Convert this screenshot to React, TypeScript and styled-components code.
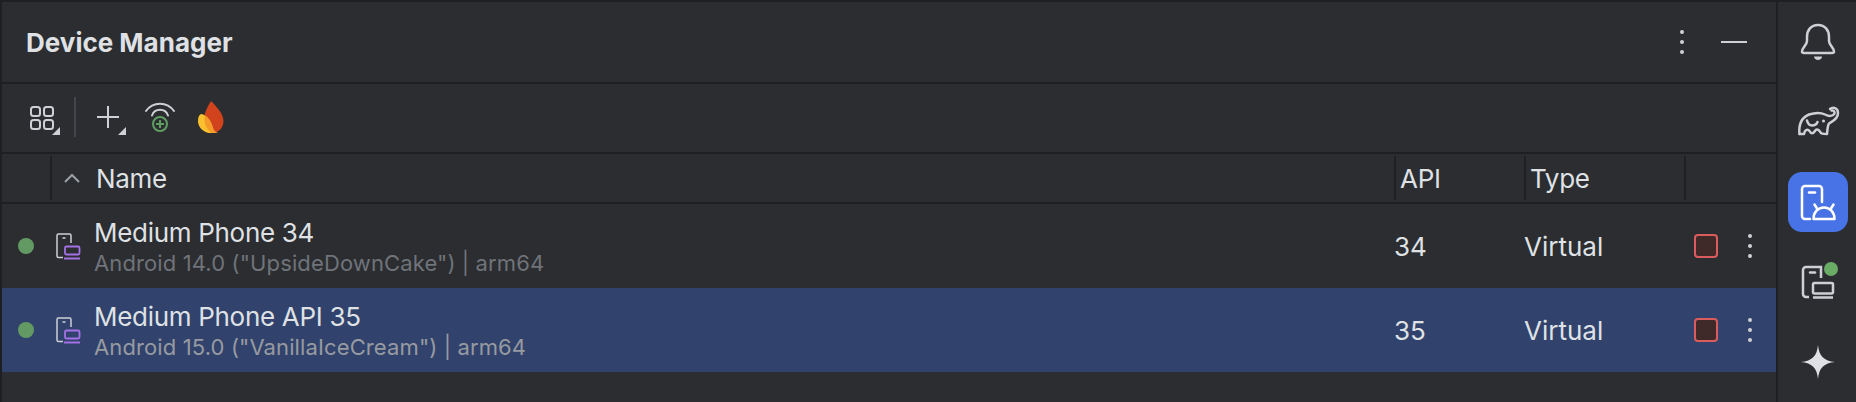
import styled, { createGlobalStyle } from 'styled-components';

const GlobalStyle = createGlobalStyle`
  html, body {
    margin: 0;
    padding: 0;
    background: #2b2d30;
    font-family: Inter, "Noto Sans", "Liberation Sans", sans-serif;
  }
`;

// ---------------------------------------------------------------------------
// Shell
// ---------------------------------------------------------------------------

const Frame = styled.div`
  display: flex;
  width: 1856px;
  height: 402px;
  box-sizing: border-box;
  border-top: 2px solid #1e1f22;
  background: #2b2d30;
  overflow: hidden;
`;

const Panel = styled.section`
  flex: 1;
  min-width: 0;
  display: flex;
  flex-direction: column;
  border-left: 2px solid #1e1f22;
`;

const TitleBar = styled.header`
  height: 82px;
  box-sizing: border-box;
  display: flex;
  align-items: center;
  padding: 0 29px 0 24px;
  border-bottom: 2px solid #1e1f22;
`;

const Title = styled.h1`
  margin: 0;
  font-size: 26px;
  font-weight: 700;
  color: #dfe1e5;
`;

const TitleActions = styled.div`
  margin-left: auto;
  display: flex;
  align-items: center;
  gap: 37px;
`;

const Dash = styled.div`
  width: 26px;
  height: 2px;
  background: #ced0d6;
`;

const Toolbar = styled.div`
  height: 70px;
  box-sizing: border-box;
  display: flex;
  align-items: center;
  gap: 8px;
  padding: 0 0 2px 20px;
  border-bottom: 2px solid #1e1f22;
`;

const ToolSlot = styled.svg`
  width: 44px;
  height: 44px;
  flex: none;
`;

const ToolDivider = styled.div`
  width: 2px;
  height: 40px;
  background: #43454a;
`;

// ---------------------------------------------------------------------------
// Table
// ---------------------------------------------------------------------------

const HeaderRow = styled.div`
  height: 50px;
  box-sizing: border-box;
  display: grid;
  grid-template-columns: 48px 1344px 130px 160px 92px;
  align-items: center;
  border-bottom: 2px solid #1e1f22;
`;

const HeaderCell = styled.div<{ $pad?: number }>`
  height: 44px;
  box-sizing: border-box;
  display: flex;
  align-items: center;
  gap: 16px;
  padding-left: ${({ $pad }) => $pad ?? 4}px;
  border-left: 2px solid #1e1f22;
  font-size: 26px;
  letter-spacing: -0.3px;
  color: #dfe1e5;
`;

const Row = styled.div<{ $selected?: boolean }>`
  height: 84px;
  display: grid;
  grid-template-columns: 1392px 130px 160px 92px;
  align-items: center;
  background: ${({ $selected }) => ($selected ? '#31436c' : 'transparent')};
`;

const DeviceCell = styled.div`
  display: flex;
  align-items: center;
  padding-left: 16px;
`;

const StatusDot = styled.span`
  width: 16px;
  height: 16px;
  flex: none;
  border-radius: 50%;
  background: #639a63;
`;

const DeviceIcon = styled.svg`
  width: 26px;
  height: 28px;
  flex: none;
  margin: 0 12px 0 22px;
`;

const DeviceText = styled.div`
  display: flex;
  flex-direction: column;
  gap: 2px;
  padding-top: 2px;
`;

const DeviceName = styled.div`
  font-size: 26px;
  line-height: 30px;
  letter-spacing: -0.3px;
  color: #dfe1e5;
`;

const DeviceMeta = styled.div<{ $selected?: boolean }>`
  font-size: 22px;
  line-height: 26px;
  letter-spacing: 0.12px;
  color: ${({ $selected }) => ($selected ? '#979aa1' : '#6f737a')};
`;

const ValueCell = styled.div`
  font-size: 26px;
  color: #dfe1e5;
`;

const RowActions = styled.div`
  display: flex;
  align-items: center;
  padding-left: 10px;
  gap: 30px;
`;

const StopButton = styled.div`
  width: 24px;
  height: 24px;
  box-sizing: border-box;
  border: 2px solid #db5c5c;
  border-radius: 4px;
  background: #402929;
`;

// ---------------------------------------------------------------------------
// Right tool strip
// ---------------------------------------------------------------------------

const Strip = styled.aside`
  width: 80px;
  flex: none;
  box-sizing: border-box;
  border-left: 2px solid #1e1f22;
  display: flex;
  flex-direction: column;
  gap: 20px;
  padding: 10px 0 0 10px;
`;

const StripButton = styled.div<{ $active?: boolean }>`
  width: 60px;
  height: 60px;
  border-radius: 14px;
  background: ${({ $active }) => ($active ? '#4873e6' : 'transparent')};
`;

const StripIcon = styled.svg`
  display: block;
  width: 60px;
  height: 60px;
`;

// ---------------------------------------------------------------------------
// Drawings
// ---------------------------------------------------------------------------

const ICON = '#ced0d6';

const Dots = () => (
  <svg width='4' height='24' viewBox='0 0 4 24' style={{ flex: 'none' }}>
    <circle cx='2' cy='2' r='2' fill={ICON} />
    <circle cx='2' cy='12' r='2' fill={ICON} />
    <circle cx='2' cy='22' r='2' fill={ICON} />
  </svg>
);

const Chevron = () => (
  <svg width='16' height='10' viewBox='0 0 16 10' style={{ flex: 'none' }}>
    <path d='M1 9 L8 2 L15 9' fill='none' stroke='#9da0a8' strokeWidth='2' />
  </svg>
);

const GridTool = () => (
  <ToolSlot viewBox='0 0 44 44'>
    <g fill='none' stroke={ICON} strokeWidth='2'>
      <rect x='9' y='12' width='9' height='9' rx='2.5' />
      <rect x='22' y='12' width='9' height='9' rx='2.5' />
      <rect x='9' y='25' width='9' height='9' rx='2.5' />
      <rect x='22' y='25' width='9' height='9' rx='2.5' />
    </g>
    <path d='M38 32 V40 H30 Z' fill={ICON} />
  </ToolSlot>
);

const PlusTool = () => (
  <ToolSlot viewBox='0 0 44 44'>
    <path d='M13 22 H35 M24 11 V33' fill='none' stroke={ICON} strokeWidth='2' />
    <path d='M42 32 V40 H34 Z' fill={ICON} />
  </ToolSlot>
);

const WifiTool = () => (
  <ToolSlot viewBox='0 0 44 44'>
    <g fill='none' stroke={ICON} strokeWidth='2' strokeLinecap='round'>
      <path d='M10 16 A17 17 0 0 1 38 16' />
      <path d='M16 20.5 A8.5 8.5 0 0 1 32 20.5' />
    </g>
    <g fill='none' stroke='#5f9e62' strokeWidth='2'>
      <circle cx='24' cy='29' r='7' />
      <path d='M20 29 H28 M24 25 V33' />
    </g>
  </ToolSlot>
);

const FirebaseTool = () => (
  <ToolSlot viewBox='0 0 44 44'>
    <path d='M23 6 C29 12 35.5 19 35.5 26.5 C35.5 33 30 38 24 38 C18 38 15 30 16 22 C17 16 20 11 23 6 Z' fill='#d0431c' />
    <path d='M10 26 C10 22 11 20 13 19 C19 20 23 26 25 33 C26 36 27 37 29 37.5 C27 38 24 38 21 38 C15 37 10 32 10 26 Z' fill='#fbc02d' />
    <path d='M17 20.5 C21 23 24 28 25 33 C26 36 27 37 30 37.2 C28 38 26 38 24 38 C20 36 17 31 16.6 26 C16.5 24 16.6 22 17 20.5 Z' fill='#f39a2b' />
  </ToolSlot>
);

const DevicePair = () => (
  <DeviceIcon viewBox='0 0 26 28'>
    <path d='M7 25.5 H2.500 A1.500 1.500 0 0 1 1 24 V3.500 A1.500 1.500 0 0 1 2.500 2 H13.500 A1.500 1.500 0 0 1 15 3.500 V11' fill='none' stroke={ICON} strokeWidth='1.500' />
    <path d='M6.500 6 H9.500' stroke={ICON} strokeWidth='1.500' />
    <rect x='9' y='14.500' width='14.500' height='8' rx='1.500' fill='none' stroke='#a571e6' strokeWidth='1.800' />
    <path d='M8 26.500 H24' stroke='#a571e6' strokeWidth='2' />
  </DeviceIcon>
);

const BellIcon = () => (
  <StripIcon viewBox='0 0 60 60'>
    <path d='M30 13 C23 13 19 18 19 25 V29 C19 33 14 36 14 39.500 C14 40.500 15 41 16 41 H44 C45 41 46 40.500 46 39.500 C46 36 41 33 41 29 V25 C41 18 37 13 30 13 Z' fill='none' stroke={ICON} strokeWidth='2.500' strokeLinejoin='round' />
    <path d='M26 44.500 H34 C34 46.500 32 48 30 48 C28 48 26 46.500 26 44.500 Z' fill={ICON} />
  </StripIcon>
);

const ElephantIcon = () => (
  <StripIcon viewBox='0 0 60 60'>
    <g transform='translate(0 -2.500)'>
      <g fill='none' stroke={ICON} strokeWidth='2.500' strokeLinecap='round' strokeLinejoin='round'>
        <path d='M11.500 44.500 C10.500 35 14 28 21 25 C27 23 33 23 37 25 C41 27 45 27 46.500 24 C47 22 45.500 20.500 43.500 21' />
        <path d='M11.500 44.500 H16 C17 39.500 20 39.500 21.500 41.500 C23 44.500 25 44.500 27 41.500 C28 39.500 30 39.500 31.500 41.500 C33 44.500 35 44.500 39 44.500 C39.500 40 39.500 36 41 34 C44 32 50 30 50 23.500 C50 18.500 45 17 42 19.500' />
        <path d='M19 31 C20 35 22 36 24 36 C26 36 28.500 35 29.500 32.500' />
      </g>
      <circle cx='35.500' cy='31.500' r='1.500' fill={ICON} />
    </g>
  </StripIcon>
);

const AndroidDeviceIcon = () => (
  <StripIcon viewBox='0 0 60 60'>
    <g fill='none' stroke='#ffffff' strokeWidth='2.500' strokeLinecap='round' strokeLinejoin='round'>
      <path d='M22 47 H17 A3 3 0 0 1 14 44 V17 A3 3 0 0 1 17 14 H31 A3 3 0 0 1 34 17 V30' />
      <path d='M25.500 47 C25.500 40 30 35.500 36 35.500 C42 35.500 46.500 40 46.500 47 Z' />
      <path d='M29 36.500 L26.500 32.500 M43 36.500 L45.500 32.500' />
    </g>
    <path d='M21 20.500 H27' stroke='#ffffff' strokeWidth='2.500' strokeLinecap='round' />
  </StripIcon>
);

const RunningDevicesIcon = () => (
  <StripIcon viewBox='0 0 60 60'>
    <g fill='none' stroke={ICON} strokeWidth='2.500'>
      <path d='M21 45 H18 A3 3 0 0 1 15 42 V18 A3 3 0 0 1 18 15 H33 V26' />
      <rect x='25' y='31' width='20' height='10.500' rx='1.500' />
      <path d='M25 45.500 H45' />
      <path d='M22 20.500 H27' strokeLinecap='round' />
    </g>
    <circle cx='43' cy='17' r='7' fill='#6aab66' />
  </StripIcon>
);

const SparkIcon = () => (
  <StripIcon viewBox='0 0 60 60'>
    <path d='M30 13 C31 24 36 29 47 30 C36 31 31 36 30 47 C29 36 24 31 13 30 C24 29 29 24 30 13 Z' fill='#dfe1e5' />
  </StripIcon>
);

// ---------------------------------------------------------------------------

const DEVICES = [
  { name: 'Medium Phone 34', meta: 'Android 14.0 ("UpsideDownCake") | arm64', api: '34', selected: false },
  { name: 'Medium Phone API 35', meta: 'Android 15.0 ("VanillaIceCream") | arm64', api: '35', selected: true },
];

export default function App() {
  return (
    <>
      <GlobalStyle />
      <Frame>
        <Panel>
          <TitleBar>
            <Title>Device Manager</Title>
            <TitleActions>
              <Dots />
              <Dash />
            </TitleActions>
          </TitleBar>
          <Toolbar>
            <GridTool />
            <ToolDivider />
            <PlusTool />
            <WifiTool />
            <FirebaseTool />
          </Toolbar>
          <HeaderRow>
            <div />
            <HeaderCell $pad={12}>
              <Chevron />
              Name
            </HeaderCell>
            <HeaderCell>API</HeaderCell>
            <HeaderCell>Type</HeaderCell>
            <HeaderCell />
          </HeaderRow>
          {DEVICES.map(device => (
            <Row key={device.name} $selected={device.selected}>
              <DeviceCell>
                <StatusDot />
                <DevicePair />
                <DeviceText>
                  <DeviceName>{device.name}</DeviceName>
                  <DeviceMeta $selected={device.selected}>{device.meta}</DeviceMeta>
                </DeviceText>
              </DeviceCell>
              <ValueCell>{device.api}</ValueCell>
              <ValueCell>Virtual</ValueCell>
              <RowActions>
                <StopButton />
                <Dots />
              </RowActions>
            </Row>
          ))}
        </Panel>
        <Strip>
          <StripButton>
            <BellIcon />
          </StripButton>
          <StripButton>
            <ElephantIcon />
          </StripButton>
          <StripButton $active>
            <AndroidDeviceIcon />
          </StripButton>
          <StripButton>
            <RunningDevicesIcon />
          </StripButton>
          <StripButton>
            <SparkIcon />
          </StripButton>
        </Strip>
      </Frame>
    </>
  );
}
